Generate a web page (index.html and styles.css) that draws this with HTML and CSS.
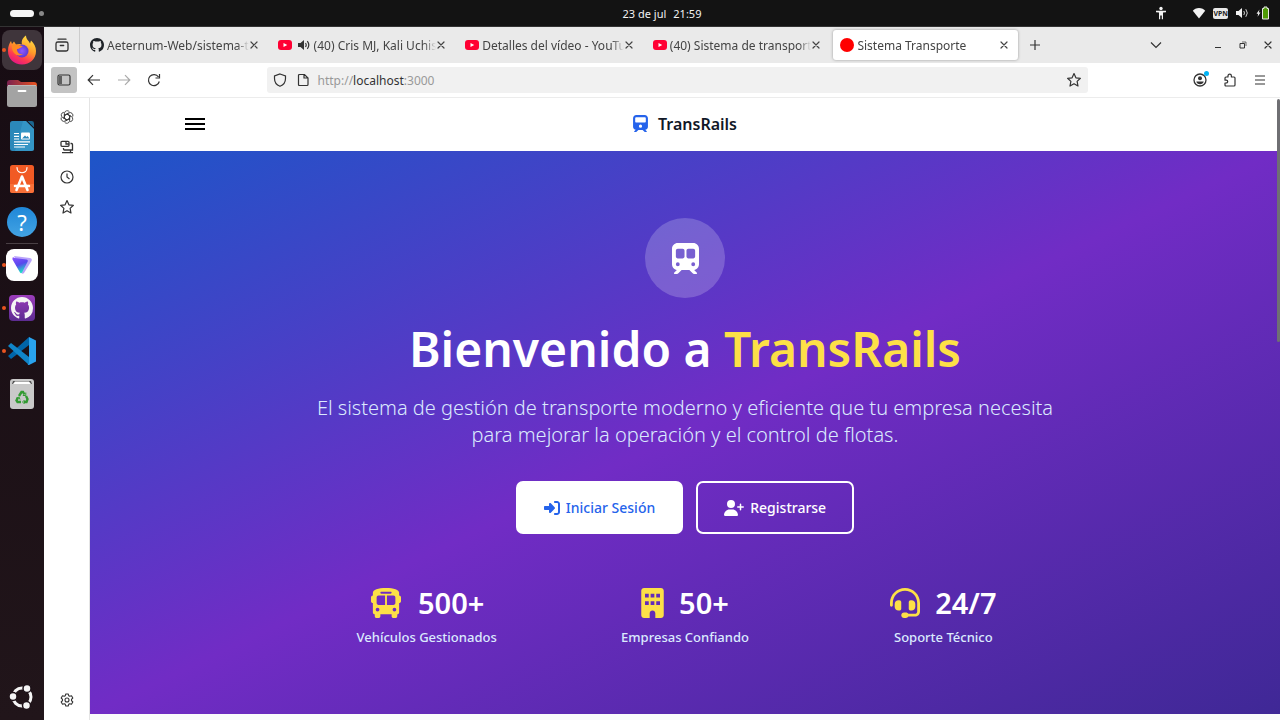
FILE: index.html
```html
<!DOCTYPE html>
<html lang="es">
<head>
    <meta charset="UTF-8">
    <meta name="viewport" content="width=device-width, initial-scale=1.0">
    <title>Sistema Transporte</title>
    <link rel="stylesheet" href="styles.css">
</head>
<body>
    <!-- Shared symbols -->
    <svg class="symbols" aria-hidden="true">
        <symbol id="github" viewBox="0 0 16 16"><path d="M8 0C3.58 0 0 3.58 0 8c0 3.54 2.29 6.53 5.47 7.59.4.07.55-.17.55-.38 0-.19-.01-.82-.01-1.49-2.01.37-2.53-.49-2.69-.94-.09-.23-.48-.94-.82-1.13-.28-.15-.68-.52-.01-.53.63-.01 1.08.58 1.23.82.72 1.21 1.87.87 2.33.66.07-.52.28-.87.51-1.07-1.78-.2-3.64-.89-3.64-3.95 0-.87.31-1.59.82-2.15-.08-.2-.36-1.02.08-2.12 0 0 .67-.21 2.2.82.64-.18 1.32-.27 2-.27s1.36.09 2 .27c1.53-1.04 2.2-.82 2.2-.82.44 1.1.16 1.92.08 2.12.51.56.82 1.27.82 2.15 0 3.07-1.87 3.75-3.65 3.95.29.25.54.73.54 1.48 0 1.07-.01 1.93-.01 2.2 0 .21.15.46.55.38A8.01 8.01 0 0 0 16 8c0-4.42-3.58-8-8-8z"/></symbol>
        <symbol id="youtube" viewBox="0 0 14 14"><rect y="2" width="14" height="10" rx="3" fill="#ff0033"/><path d="M5.500 5v4L9.200 7z" fill="#fff"/></symbol>
        <symbol id="close" viewBox="0 0 8 8"><path d="M1 1l6 6M7 1L1 7" fill="none" stroke="currentColor" stroke-width="1.200" stroke-linecap="round"/></symbol>
        <symbol id="star" viewBox="0 0 16 16"><path d="M8 1.600l1.900 4.200 4.500.5-3.300 3.100.9 4.600L8 11.700 4 14l.9-4.600L1.600 6.300l4.500-.5z" fill="none" stroke="currentColor" stroke-width="1.200" stroke-linejoin="round"/></symbol>
    </svg>

    <header class="topbar">
        <div class="workspaces"><span class="pill"></span><span class="dot"></span></div>
        <div class="clock"><span>23 de jul</span><span>21:59</span></div>
        <div class="tray">
            <svg class="access" width="12" height="14" viewBox="0 0 12 14" fill="#f2f2f2"><circle cx="6" cy="2.500" r="1.700"/><path d="M1 4.800h10v1.400l-3 .4v6.600H6.800V9.500H5.200v3.700H4V6.600l-3-.4z"/></svg>
            <svg width="14" height="12" viewBox="0 0 14 12"><path d="M7 11.500L.8 3.800C3-.1 11-.1 13.200 3.800z" fill="#f2f2f2"/></svg>
            <span class="vpn">VPN</span>
            <svg width="14" height="12" viewBox="0 0 14 12"><path d="M1 4h2.500L7 1v10L3.500 8H1z" fill="#f2f2f2"/><path d="M8.800 4q1.400 2 0 4M10.800 2.200q3 3.800 0 7.600" fill="none" stroke="#d0d0d0"/></svg>
            <svg width="14" height="14" viewBox="0 0 14 14"><path d="M3.500 3.500L.5 7.700h1.700l-.6 3L4.500 6.500H2.800z" fill="#f2f2f2"/><path d="M8 1h3v1.500h1.500v10.500h-6V2.500H8z" fill="#4e9a06" stroke="#e8e8e8"/></svg>
        </div>
    </header>

    <div class="desktop">
        <nav class="dock" aria-label="Aplicaciones">
            <a href="#" class="app focused running" title="Firefox"><svg width="30" height="30" viewBox="0 0 30 30"><defs><linearGradient id="fx" x1="0.800" y1="0" x2="0.300" y2="1"><stop offset="0" stop-color="#ffe847"/><stop offset=".45" stop-color="#ff9a28"/><stop offset=".75" stop-color="#ff3b50"/><stop offset="1" stop-color="#e21587"/></linearGradient><radialGradient id="globe"><stop offset="0" stop-color="#9059ff"/><stop offset="1" stop-color="#5b3ad0"/></radialGradient></defs><path d="M1 16C1 11 2.500 8 4 6l1 3 2-2.500 2 3c2-.5 4-1 6 0-1-4 1-7 4-9 0 4 3 5 4 8l1-3c3 3 5 6 5 10.500C29 24 23 29.500 15 29.500S1 24 1 16z" fill="url(#fx)"/><circle cx="15" cy="16" r="6.500" fill="url(#globe)"/><path d="M5 10c3 0 7-1 11 2-3 0-3 2-6 2 0 3 2 6 6 5-5 4-12-1-11-9z" fill="#ff8a22"/></svg></a>
            <a href="#" class="app" title="Archivos"><svg width="30" height="30" viewBox="0 0 30 30"><defs><linearGradient id="fold"><stop offset="0" stop-color="#7a2050"/><stop offset="1" stop-color="#e95420"/></linearGradient></defs><path d="M0 5q0-3 3-3h8l3 2h13q3 0 3 3v9H0z" fill="url(#fold)"/><rect y="7" width="30" height="22" rx="2.500" fill="#a3a3a3"/><path d="M1 7.500h28" stroke="#bbb"/><path d="M11.500 13h7" stroke="#fff" stroke-width="1.800" stroke-linecap="round"/></svg></a>
            <a href="#" class="app" title="Writer"><svg width="30" height="30" viewBox="0 0 30 30"><path d="M5.500 0H19l8 8v19.500q0 2.500-2.500 2.500h-19Q3 30 3 27.500v-25Q3 0 5.500 0z" fill="#2b88b9"/><path d="M16 0h3l8 8v20q0 2-2.500 2H8z" fill="#3da0d0" opacity=".55"/><path d="M20.500 0h4.200q2.300 0 2.300 2.300v4.200z" fill="#1b668f"/><path d="M7 12.500h5M7 15.300h5M7 18h5M7 20.800h16M7 23.500h14M7 26h11" stroke="#fff" stroke-width="1.200"/><rect x="14" y="11.500" width="9" height="7" rx="1" fill="#fff"/><path d="M15 17.500l3-3 1.500 1.500 1-1 2 2.500z" fill="#2b88b9"/></svg></a>
            <a href="#" class="app" title="Centro de aplicaciones"><svg width="30" height="30" viewBox="0 0 30 30"><rect x="3" y="1" width="24" height="28" rx="2.500" fill="#f15a24"/><path d="M3 20h24v7q0 2-2.500 2h-19Q3 29 3 27z" fill="#f97038"/><path d="M10 3.500c0 7 10 7 10 0" fill="none" stroke="#fff" stroke-width="1.200" stroke-linecap="round"/><path d="M15 12.500L9.500 26M15 12.500L20.500 26M8 22h14" fill="none" stroke="#fff" stroke-width="2.600" stroke-linecap="round"/></svg></a>
            <a href="#" class="app help" title="Ayuda"><span>?</span></a>
            <hr>
            <a href="#" class="app running" title="Proton VPN"><svg width="32" height="32" viewBox="0 0 32 32"><defs><linearGradient id="vpn" x1="0" y1="0" x2=".4" y2="1"><stop offset="0" stop-color="#8a50ff"/><stop offset=".55" stop-color="#5749ed"/><stop offset="1" stop-color="#20dfc5"/></linearGradient></defs><rect width="32" height="32" rx="8" fill="#fff"/><path d="M8 7l16 2q2.500.5 1.500 3l-7.500 12q-1.500 1.500-2.500 0z" fill="#b9a3fa"/><path d="M8.500 9l12 1.500q2 .5 1 2.500L16 23.500q-1 1.500-2 0L6.500 10.500Q6 7 8.500 9z" fill="url(#vpn)"/></svg></a>
            <a href="#" class="app running" title="GitHub Desktop"><svg width="26" height="26" viewBox="0 0 26 26"><defs><linearGradient id="gh" x2="0" y2="1"><stop offset="0" stop-color="#9b3dbb"/><stop offset="1" stop-color="#5c2c91"/></linearGradient></defs><rect width="26" height="26" rx="4" fill="url(#gh)"/><use href="#github" x="2" y="2" width="22" height="22" fill="#f4f4f4"/></svg></a>
            <a href="#" class="app running" title="Visual Studio Code"><svg width="28" height="28" viewBox="0 0 28 28"><path d="M0 19l21-19v8L3 22z" fill="#0065a9"/><path d="M0 9l3-3 18 14v8z" fill="#1085c9"/><path d="M21 0l7 3.400v21.200L21 28q-1 0-1.500-.8.500.3 1.500-.7v-25z" fill="#29a3ee"/></svg></a>
            <a href="#" class="app" title="Papelera"><svg width="26" height="30" viewBox="0 0 26 30"><rect x="1" width="24" height="30" rx="3" fill="#c9c9c9"/><path d="M3 5l1-3h18l1 3z" fill="#555"/><path d="M4 5l2-2.500h14L22 5z" fill="#fff"/><g fill="none" stroke="#329b32" stroke-width="2.400"><path d="M10 17l2.500-4h1.500l1.500 2.500M17 17l1.500 3-1 3H15M12 23H8.500l-1-1.500 1.500-3"/><path d="M16.800 13.500v3h-3M15.500 21l-2 2 2 2M7 19.500l3-1.500 1 2.500" stroke-width="1"/></g></svg></a>
            <a href="#" class="app show-apps" title="Mostrar aplicaciones"><svg width="26" height="26" viewBox="0 0 26 26"><circle cx="13" cy="13" r="9" fill="none" stroke="#f5f5f5" stroke-width="3"/><g fill="#f5f5f5" stroke="#1d1218" stroke-width="1.500"><circle cx="4" cy="12.500" r="4"/><circle cx="18" cy="4.500" r="4"/><circle cx="17.500" cy="21.500" r="4"/></g></svg></a>
        </nav>

        <div class="browser">
            <div class="tabstrip">
                <button class="icon-btn tabview" aria-label="Ver pestañas"><svg width="14" height="14" viewBox="0 0 14 14" fill="none" stroke="currentColor" stroke-width="1.300" stroke-linecap="round"><rect x="1" y="4" width="12" height="9" rx="1.800"/><path d="M3 1.200h8M5.300 7.500h3.400"/></svg></button>
                <div class="tabs" role="tablist">
                    <div class="tab" role="tab"><svg class="favicon" fill="#1f2328"><use href="#github"/></svg><span class="tab-title">Aeternum-Web/sistema-t</span><button class="close" aria-label="Cerrar"><svg><use href="#close"/></svg></button></div>
                    <div class="tab" role="tab"><svg class="favicon"><use href="#youtube"/></svg><svg class="sound" width="14" height="12" viewBox="0 0 14 12"><path d="M1 4h2.500L7 1v10L3.500 8H1z" fill="#333"/><path d="M8.500 4q1.400 2 0 4M10.300 2.200q3 3.800 0 7.600" fill="none" stroke="#333" stroke-width="1.200"/></svg><span class="tab-title">(40) Cris MJ, Kali Uchis</span><button class="close" aria-label="Cerrar"><svg><use href="#close"/></svg></button></div>
                    <div class="tab" role="tab"><svg class="favicon"><use href="#youtube"/></svg><span class="tab-title">Detalles del vídeo - YouTu</span><button class="close" aria-label="Cerrar"><svg><use href="#close"/></svg></button></div>
                    <div class="tab" role="tab"><svg class="favicon"><use href="#youtube"/></svg><span class="tab-title">(40) Sistema de transport</span><button class="close" aria-label="Cerrar"><svg><use href="#close"/></svg></button></div>
                    <div class="tab active" role="tab" aria-selected="true"><span class="favicon red"></span><span class="tab-title">Sistema Transporte</span><button class="close" aria-label="Cerrar"><svg><use href="#close"/></svg></button></div>
                </div>
                <button class="icon-btn new-tab" aria-label="Nueva pestaña"><svg width="12" height="12" viewBox="0 0 12 12"><path d="M6 1v10M1 6h10" stroke="currentColor" stroke-width="1.200"/></svg></button>
                <div class="window-controls">
                    <button class="icon-btn all-tabs" aria-label="Lista de pestañas"><svg width="12" height="8" viewBox="0 0 12 8"><path d="M1 1.500l5 5 5-5" fill="none" stroke="currentColor" stroke-width="1.200"/></svg></button>
                    <button class="icon-btn" aria-label="Minimizar"><svg width="8" height="8" viewBox="0 0 8 8"><path d="M1 6.500h6" stroke="currentColor"/></svg></button>
                    <button class="icon-btn" aria-label="Restaurar"><svg width="8" height="8" viewBox="0 0 8 8" fill="none" stroke="currentColor"><path d="M1 2.500h4.500V7H1z"/><path d="M3 1h4v4" stroke-width=".7"/></svg></button>
                    <button class="icon-btn" aria-label="Cerrar ventana"><svg width="8" height="8"><use href="#close"/></svg></button>
                </div>
            </div>

            <div class="toolbar">
                <div class="nav-buttons">
                    <button class="icon-btn pressed" aria-label="Barra lateral"><svg width="14" height="12" viewBox="0 0 14 12"><rect x="1" y="1" width="12" height="10" rx="1.500" fill="none" stroke="currentColor" stroke-width="1.200"/><path d="M2 2h3v8H2z" fill="currentColor" opacity=".7"/></svg></button>
                    <button class="icon-btn" aria-label="Atrás"><svg width="14" height="12" viewBox="0 0 14 12"><path d="M13 6H1.500M6 1.200L1.200 6 6 10.800" fill="none" stroke="currentColor" stroke-width="1.200"/></svg></button>
                    <button class="icon-btn" aria-label="Adelante" disabled><svg width="14" height="12" viewBox="0 0 14 12"><path d="M1 6h11.500M8 1.200L12.800 6 8 10.800" fill="none" stroke="currentColor" stroke-width="1.200"/></svg></button>
                    <button class="icon-btn" aria-label="Recargar"><svg width="14" height="14" viewBox="0 0 14 14"><path d="M12.300 8.500A5.500 5.500 0 1 1 11.500 4M12.500 1v4h-4" fill="none" stroke="currentColor" stroke-width="1.200"/></svg></button>
                </div>
                <div class="urlbar">
                    <svg width="14" height="14" viewBox="0 0 14 14" fill="none" stroke="currentColor" stroke-width="1.200"><path d="M7 1l5.500 2v2.500C12.500 9.500 10.500 12 7 13.300 3.500 12 1.500 9.500 1.500 5.500V3z"/></svg>
                    <svg class="file-icon" width="12" height="14" viewBox="0 0 12 14" fill="none" stroke="currentColor" stroke-width="1.200"><path d="M1.500 2.500q0-1 1-1h5l3.500 3.500v6.500q0 1-1 1H2.500q-1 0-1-1zM7 1.500V5h4"/></svg>
                    <a href="http://localhost:3000" class="url">http://<b>localhost</b>:3000</a>
                    <button class="icon-btn bookmark" aria-label="Marcar página"><svg width="16" height="16"><use href="#star"/></svg></button>
                </div>
                <div class="tools">
                    <button class="icon-btn account" aria-label="Cuenta"><svg width="14" height="14" viewBox="0 0 14 14"><circle cx="7" cy="7" r="6" fill="none" stroke="currentColor" stroke-width="1.300"/><circle cx="7" cy="5.200" r="2" fill="currentColor"/><path d="M3.300 8.500h7.400Q10 11.200 7 11.200T3.300 8.500z" fill="currentColor"/></svg></button>
                    <button class="icon-btn" aria-label="Extensiones"><svg width="14" height="14" viewBox="0 0 14 14" fill="none" stroke="currentColor" stroke-width="1.200" stroke-linejoin="round"><path d="M2 5q0-1 1-1h2V3q0-1.800 1.700-1.800T8.400 3v1H11q1 0 1 1v7q0 1-1 1H3q-1 0-1-1v-2h1.200q1.500 0 1.500-1.400T3.200 7.200H2z"/></svg></button>
                    <button class="icon-btn" aria-label="Menú"><svg width="12" height="10" viewBox="0 0 12 10"><path d="M1 1h10M1 5h10M1 9h10" stroke="currentColor"/></svg></button>
                </div>
            </div>

            <div class="content">
                <aside class="sidebar">
                    <button class="icon-btn" aria-label="Chatbot"><svg width="14" height="14" viewBox="0 0 14 14" fill="none" stroke="currentColor" stroke-width=".8"><g id="petal"><path d="M4.400 8.400V3.400a2.800 2.800 0 0 1 5.100-1.500M4.400 5.500L7 4l4.300 2.500"/></g><use href="#petal" transform="rotate(60 7 7)"/><use href="#petal" transform="rotate(120 7 7)"/><use href="#petal" transform="rotate(180 7 7)"/><use href="#petal" transform="rotate(240 7 7)"/><use href="#petal" transform="rotate(300 7 7)"/></svg></button>
                    <button class="icon-btn" aria-label="Pestañas sincronizadas"><svg width="14" height="14" viewBox="0 0 14 14" fill="none" stroke="currentColor" stroke-width="1.300"><rect x="1" y="1.300" width="8" height="5" rx="1"/><path d="M6 1.500v2.500h3M10.500 3.500h1q1 0 1 1V10H4.500q-1 0-1-1V8M2 12.600h11M10.500 10v2"/></svg></button>
                    <button class="icon-btn" aria-label="Historial"><svg width="14" height="14" viewBox="0 0 14 14" fill="none" stroke="currentColor" stroke-width="1.200"><circle cx="7" cy="7" r="6"/><path d="M7 3.500V7l2.500 2"/></svg></button>
                    <button class="icon-btn" aria-label="Marcadores"><svg width="16" height="16"><use href="#star"/></svg></button>
                    <button class="icon-btn settings" aria-label="Ajustes"><svg width="14" height="14" viewBox="0 0 14 14" fill="none" stroke="currentColor" stroke-width="1.100" stroke-linejoin="round"><path d="M5.800 1h2.400l.5 1.700 1.100.6 1.700-.5 1.300 2.200L11.500 6.300v1.400L12.800 9l-1.300 2.200-1.700-.5-1.100.6L8.200 13H5.800l-.5-1.700-1.100-.6-1.700.5L1.200 9l1.300-1.300V6.300L1.200 5l1.300-2.200 1.700.5 1.100-.6z"/><circle cx="7" cy="7" r="2"/></svg></button>
                </aside>

                <div class="page">
                    <nav class="navbar">
                        <button class="hamburger" aria-label="Abrir menú"><span></span><span></span><span></span></button>
                        <a href="#" class="brand">
                            <svg width="15" height="17" viewBox="0 0 448 512"><path d="M96 0C43 0 0 43 0 96L0 352c0 48 35.200 87.700 81.100 94.900l-46 46C28.100 499.900 33.100 512 43 512l39.700 0c8.500 0 16.600-3.400 22.600-9.400L160 448l128 0 54.600 54.600c6 6 14.100 9.400 22.600 9.400l39.700 0c10 0 15-12.100 7.900-19.100l-46-46c46-7.100 81.100-46.900 81.100-94.900l0-256c0-53-43-96-96-96L96 0zM64 96c0-17.700 14.300-32 32-32l256 0c17.700 0 32 14.300 32 32l0 96c0 17.700-14.300 32-32 32L96 224c-17.700 0-32-14.300-32-32l0-96zM224 288a48 48 0 1 1 0 96 48 48 0 1 1 0-96z" fill-rule="evenodd"/></svg>
                            <span>TransRails</span>
                        </a>
                    </nav>

                    <main class="hero">
                        <div class="hero-icon">
                            <svg width="27" height="31" viewBox="0 0 448 512"><path d="M96 0C43 0 0 43 0 96L0 352c0 48 35.200 87.700 81.100 94.900l-46 46C28.100 499.900 33.100 512 43 512l39.700 0c8.500 0 16.600-3.400 22.600-9.400L160 448l128 0 54.600 54.600c6 6 14.100 9.400 22.600 9.400l39.700 0c10 0 15-12.100 7.900-19.100l-46-46c46-7.100 81.100-46.900 81.100-94.900l0-256c0-53-43-96-96-96L96 0zM64 128c0-17.700 14.300-32 32-32l80 0c17.700 0 32 14.300 32 32l0 96c0 17.700-14.300 32-32 32l-80 0c-17.700 0-32-14.300-32-32l0-96zM272 96l80 0c17.700 0 32 14.300 32 32l0 96c0 17.700-14.300 32-32 32l-80 0c-17.700 0-32-14.300-32-32l0-96c0-17.700 14.300-32 32-32zM64 352a32 32 0 1 1 64 0 32 32 0 1 1 -64 0zm288-32a32 32 0 1 1 0 64 32 32 0 1 1 0-64z" fill-rule="evenodd"/></svg>
                        </div>
                        <h1>Bienvenido a <span>TransRails</span></h1>
                        <p class="lead">El sistema de gestión de transporte moderno y eficiente que tu empresa necesita para mejorar la operación y el control de flotas.</p>
                        <div class="actions">
                            <a href="#" class="btn btn-light">
                                <svg width="16" height="16" viewBox="0 0 512 512"><path d="M217.900 105.900L340.700 228.700c7.200 7.200 11.300 17.100 11.300 27.300s-4.100 20.100-11.300 27.300L217.900 406.100c-6.400 6.400-15 9.900-24 9.900c-18.700 0-33.900-15.200-33.900-33.900l0-62.100L32 320c-17.700 0-32-14.300-32-32l0-64c0-17.700 14.300-32 32-32l128 0 0-62.100c0-18.700 15.200-33.900 33.900-33.900c9 0 17.600 3.600 24 9.900zM352 416l64 0c17.700 0 32-14.300 32-32l0-256c0-17.700-14.300-32-32-32l-64 0c-17.700 0-32-14.300-32-32s14.300-32 32-32l64 0c53 0 96 43 96 96l0 256c0 53-43 96-96 96l-64 0c-17.700 0-32-14.300-32-32s14.300-32 32-32z"/></svg>
                                Iniciar Sesión
                            </a>
                            <a href="#" class="btn btn-outline">
                                <svg width="20" height="16" viewBox="0 0 640 512"><path d="M96 128a128 128 0 1 1 256 0A128 128 0 1 1 96 128zM0 482.300C0 383.800 79.800 304 178.300 304l91.400 0C368.200 304 448 383.800 448 482.300c0 16.400-13.300 29.700-29.700 29.700L29.700 512C13.300 512 0 498.700 0 482.300zM504 312l0-64-64 0c-13.300 0-24-10.700-24-24s10.700-24 24-24l64 0 0-64c0-13.300 10.700-24 24-24s24 10.700 24 24l0 64 64 0c13.300 0 24 10.700 24 24s-10.700 24-24 24l-64 0 0 64c0 13.300-10.700 24-24 24s-24-10.700-24-24z"/></svg>
                                Registrarse
                            </a>
                        </div>
                        <div class="stats">
                            <div class="stat">
                                <div class="stat-value"><svg width="34" height="30" viewBox="0 0 576 512"><path d="M288 0C422.400 0 512 35.200 512 80l0 16 0 32c17.700 0 32 14.300 32 32l0 64c0 17.700-14.300 32-32 32l0 160c0 17.700-14.300 32-32 32l0 32c0 17.700-14.300 32-32 32l-32 0c-17.700 0-32-14.300-32-32l0-32-192 0 0 32c0 17.700-14.300 32-32 32l-32 0c-17.700 0-32-14.300-32-32l0-32c-17.700 0-32-14.300-32-32l0-160c-17.700 0-32-14.300-32-32l0-64c0-17.700 14.300-32 32-32l0-32 0-16C64 35.200 153.600 0 288 0zM128 160l0 96c0 17.700 14.300 32 32 32l112 0 0-160-112 0c-17.700 0-32 14.300-32 32zM304 288l112 0c17.700 0 32-14.300 32-32l0-96c0-17.700-14.300-32-32-32l-112 0 0 160zM144 400a32 32 0 1 0 0-64 32 32 0 1 0 0 64zm288 0a32 32 0 1 0 0-64 32 32 0 1 0 0 64zM384 80c0-8.800-7.200-16-16-16L208 64c-8.800 0-16 7.200-16 16s7.200 16 16 16l160 0c8.800 0 16-7.200 16-16z" fill-rule="evenodd"/></svg>500+</div>
                                <p>Vehículos Gestionados</p>
                            </div>
                            <div class="stat">
                                <div class="stat-value"><svg width="23" height="30" viewBox="0 0 384 512"><path d="M48 0C21.500 0 0 21.500 0 48L0 464c0 26.500 21.500 48 48 48l96 0 0-80c0-26.500 21.500-48 48-48s48 21.500 48 48l0 80 96 0c26.500 0 48-21.500 48-48l0-416c0-26.500-21.500-48-48-48L48 0zM64 96h64v64H64zM160 96h64v64h-64zM256 96h64v64h-64zM64 224h64v64H64zM160 224h64v64h-64zM256 224h64v64h-64z" fill-rule="evenodd"/></svg>50+</div>
                                <p>Empresas Confiando</p>
                            </div>
                            <div class="stat">
                                <div class="stat-value"><svg width="30" height="30" viewBox="0 0 512 512"><path d="M256 48C141.100 48 48 141.100 48 256l0 40c0 13.300-10.700 24-24 24s-24-10.700-24-24l0-40C0 114.600 114.600 0 256 0S512 114.600 512 256l0 144.100c0 48.600-39.400 88-88.100 88L313.600 488c-8.300 14.300-23.800 24-41.600 24l-32 0c-26.500 0-48-21.500-48-48s21.500-48 48-48l32 0c17.800 0 33.300 9.700 41.600 24l110.400 .1c22.100 0 40-17.900 40-40L464 256c0-114.900-93.100-208-208-208zM144 208l16 0c17.700 0 32 14.300 32 32l0 112c0 17.700-14.300 32-32 32l-16 0c-35.300 0-64-28.700-64-64l0-48c0-35.300 28.700-64 64-64zm224 0c35.300 0 64 28.700 64 64l0 48c0 35.300-28.700 64-64 64l-16 0c-17.700 0-32-14.300-32-32l0-112c0-17.700 14.300-32 32-32l16 0z"/></svg>24/7</div>
                                <p>Soporte Técnico</p>
                            </div>
                        </div>
                    </main>
                    <div class="scrollbar"></div>
                </div>
            </div>
        </div>
    </div>
</body>
</html>
```

FILE: styles.css
```css
* {
    box-sizing: border-box;
}

body {
    margin: 0;
    height: 100vh;
    display: flex;
    flex-direction: column;
    overflow: hidden;
    background: #fff;
    color: #333;
    font-family: "Noto Sans", sans-serif;
    font-size: 12px;
}

svg {
    display: block;
    flex-shrink: 0;
}

a {
    color: inherit;
    text-decoration: none;
}

button {
    padding: 0;
    border: none;
    background: none;
    color: inherit;
    font: inherit;
    cursor: pointer;
}

.symbols {
    position: absolute;
    width: 0;
    height: 0;
}

/* Top bar */
.topbar {
    display: grid;
    grid-template-columns: 1fr auto 1fr;
    align-items: center;
    height: 27px;
    flex-shrink: 0;
    padding: 0 10px;
    border-bottom: 1px solid #333;
    background: #131313;
    color: #f2f2f2;
}

.workspaces,
.clock,
.tray {
    display: flex;
    align-items: center;
}

.workspaces {
    gap: 5px;
}

.pill {
    width: 24px;
    height: 7px;
    border-radius: 4px;
    background: #f5f5f5;
}

.dot {
    width: 5px;
    height: 5px;
    border-radius: 50%;
    background: #888;
}

.clock {
    gap: 7px;
    padding-left: 44px;
    font-size: 11px;
}

.tray {
    justify-content: flex-end;
    gap: 7px;
}

.access {
    margin-right: 18px;
}

.vpn {
    border-radius: 2px;
    background: #e8e8e8;
    color: #222;
    font-size: 7px;
    font-weight: 700;
    line-height: 11px;
}

.desktop {
    display: flex;
    flex: 1;
    min-height: 0;
}

/* Dock */
.dock {
    display: flex;
    flex-direction: column;
    align-items: center;
    gap: 3px;
    width: 44px;
    flex-shrink: 0;
    padding: 3px 2px;
    background: linear-gradient(#170c13, #21151a);
}

.app {
    position: relative;
    display: flex;
    align-items: center;
    justify-content: center;
    width: 40px;
    height: 40px;
    flex-shrink: 0;
    border-radius: 8px;
}

.focused {
    background: #3f353b;
}

.running::before {
    content: "";
    position: absolute;
    left: 0;
    top: 18px;
    width: 4px;
    height: 4px;
    border-radius: 50%;
    background: #e95420;
}

.help span {
    width: 30px;
    height: 30px;
    border-radius: 50%;
    background: linear-gradient(#1f87d8, #43a3e3);
    color: #fff;
    font-size: 22px;
    line-height: 30px;
    text-align: center;
}

.dock hr {
    width: 32px;
    margin: -2px 0;
    border: none;
    border-top: 1px solid #4a4045;
}

.show-apps {
    margin-top: auto;
}

/* Browser window */
.browser {
    display: flex;
    flex-direction: column;
    flex: 1;
    min-width: 0;
}

.icon-btn {
    display: flex;
    align-items: center;
    justify-content: center;
    width: 26px;
    height: 26px;
    flex-shrink: 0;
    border-radius: 3px;
}

.tabstrip {
    display: flex;
    align-items: center;
    height: 36px;
    flex-shrink: 0;
    background: #eaeaea;
}

.tabview {
    width: 36px;
    height: 36px;
    border-right: 1px solid #ccc;
    border-radius: 0;
}

.tabs {
    display: flex;
    gap: 3px;
    flex: 0 1 938px;
    min-width: 0;
    padding-left: 3px;
}

.tab {
    display: flex;
    align-items: center;
    flex: 1;
    min-width: 0;
    height: 30px;
    padding: 0 9px 0 7px;
    border-radius: 3px;
    color: #444;
}

.tab.active {
    background: #fff;
    box-shadow: 0 0 3px rgba(0, 0, 0, 0.35);
}

.favicon {
    width: 14px;
    height: 14px;
    flex-shrink: 0;
}

.red {
    border-radius: 50%;
    background: #f00;
}

.sound {
    margin-left: 5px;
}

.tab-title {
    flex: 1;
    margin-left: 3px;
    overflow: hidden;
    white-space: nowrap;
    -webkit-mask-image: linear-gradient(to left, transparent, #000 12px);
    mask-image: linear-gradient(to left, transparent, #000 12px);
}

.close {
    flex-shrink: 0;
    padding: 1px;
}

.close svg {
    width: 8px;
    height: 8px;
}

.new-tab {
    margin-left: 4px;
}

.window-controls {
    display: flex;
    margin-left: auto;
}

.window-controls .icon-btn {
    width: 25px;
}

.all-tabs {
    margin-right: 37px;
}

.toolbar {
    display: flex;
    align-items: center;
    justify-content: space-between;
    height: 35px;
    flex-shrink: 0;
    padding: 0 7px;
    border-bottom: 1px solid #ececec;
}

.nav-buttons,
.tools {
    display: flex;
    gap: 4px;
}

.pressed {
    background: #c3c3c3;
}

.icon-btn:disabled {
    color: #aaa;
}

.urlbar {
    display: flex;
    align-items: center;
    flex: 0 1 821px;
    height: 26px;
    padding: 0 1px 0 6px;
    border-radius: 3px;
    background: #f1f1f1;
}

.file-icon {
    margin-left: 10px;
}

.url {
    flex: 1;
    margin-left: 9px;
    color: #999;
}

.url b {
    color: #333;
    font-weight: 400;
}

.account {
    position: relative;
}

.account::after {
    content: "";
    position: absolute;
    top: 4px;
    right: 4px;
    width: 5px;
    height: 5px;
    border-radius: 50%;
    background: #00b3f4;
}

.content {
    display: flex;
    flex: 1;
    min-height: 0;
}

.sidebar {
    display: flex;
    flex-direction: column;
    align-items: center;
    gap: 4px;
    width: 46px;
    flex-shrink: 0;
    padding: 6px 0 7px;
    border-right: 1px solid #e4e4e4;
}

.settings {
    margin-top: auto;
}

/* Page */
.page {
    position: relative;
    flex: 1;
    min-width: 0;
    overflow: hidden;
    background: #f9fafb;
}

.scrollbar {
    position: absolute;
    top: 1px;
    right: 0;
    width: 3px;
    height: 243px;
    border-radius: 2px;
    background: #6f6f73;
}

.navbar {
    display: grid;
    grid-template-columns: 1fr auto 1fr;
    align-items: center;
    height: 53px;
    padding: 0 8% 2px;
    background: #fff;
}

.hamburger {
    display: flex;
    flex-direction: column;
    gap: 3px;
    width: 20px;
}

.hamburger span {
    height: 2px;
    background: #000;
}

.brand {
    display: flex;
    align-items: center;
    gap: 10px;
    color: #111827;
    font-size: 16px;
    font-weight: 600;
}

.brand svg {
    fill: #2563eb;
}

.hero {
    display: flex;
    flex-direction: column;
    align-items: center;
    padding: 67px 27px;
    background: linear-gradient(to bottom right, #1d55c8, #712cc5, #3f2896);
    color: #fff;
    text-align: center;
}

.hero-icon {
    display: flex;
    align-items: center;
    justify-content: center;
    width: 80px;
    height: 80px;
    border-radius: 50%;
    background: rgba(255, 255, 255, 0.2);
}

.hero svg {
    fill: currentColor;
}

.hero h1 {
    margin: 26px 0 20px;
    font-size: 48px;
    font-weight: 600;
    line-height: 50px;
}

.hero h1 span {
    color: #fde047;
}

.lead {
    max-width: 748px;
    margin: 0;
    color: #dbeafe;
    font-size: 20px;
    font-weight: 300;
    line-height: 27px;
}

.actions {
    display: flex;
    gap: 13px;
    margin: 33px 0 52px;
}

.btn {
    display: flex;
    align-items: center;
    gap: 6px;
    height: 53px;
    padding: 0 26px;
    border: 2px solid #fff;
    border-radius: 7px;
    font-size: 14px;
    font-weight: 500;
}

.btn-light {
    background: #fff;
    color: #2563eb;
}

.stats {
    display: grid;
    grid-template-columns: repeat(3, 1fr);
    gap: 27px;
    width: 100%;
    max-width: 748px;
}

.stat-value {
    display: flex;
    align-items: center;
    justify-content: center;
    gap: 15px;
    height: 33px;
    font-size: 29px;
    font-weight: 600;
}

.stat-value svg {
    fill: #fde047;
}

.stat p {
    margin: 8px 0 0;
    color: #dbeafe;
    font-size: 13px;
    font-weight: 500;
    line-height: 20px;
}
```
